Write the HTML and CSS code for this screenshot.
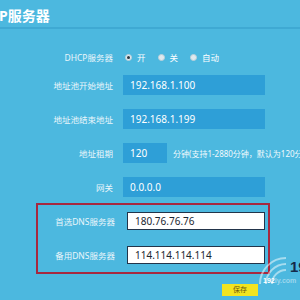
FILE: index.html
```html
<!DOCTYPE html>
<html lang="zh-CN">
<head>
    <meta charset="UTF-8">
    <title>DHCP服务器</title>
    <link rel="stylesheet" href="styles.css">
</head>
<body>
    <div class="page">
        <div class="header">
            <h1>DHCP服务器</h1>
        </div>

        <div class="form">
            <div class="row radio-row">
                <label class="label">DHCP服务器</label>
                <div class="radios">
                    <span class="radio checked"></span><span class="radio-text">开</span>
                    <span class="radio"></span><span class="radio-text">关</span>
                    <span class="radio"></span><span class="radio-text">自动</span>
                </div>
            </div>
            <div class="row">
                <label class="label">地址池开始地址</label>
                <div class="input">192.168.1.100</div>
            </div>
            <div class="row">
                <label class="label">地址池结束地址</label>
                <div class="input">192.168.1.199</div>
            </div>
            <div class="row">
                <label class="label">地址租期</label>
                <div class="input short">120</div>
                <span class="hint">分钟(支持1-2880分钟，默认为120分钟)</span>
            </div>
            <div class="row">
                <label class="label">网关</label>
                <div class="input">0.0.0.0</div>
            </div>

            <div class="dns-box">
                <div class="row">
                    <label class="label">首选DNS服务器</label>
                    <div class="input white">180.76.76.76</div>
                </div>
                <div class="row">
                    <label class="label">备用DNS服务器</label>
                    <div class="input white">114.114.114.114</div>
                </div>
            </div>

            <div class="actions">
                <button class="btn-save">保存</button>
            </div>
        </div>

        <div class="logo">
            <svg width="44" height="44" viewBox="0 0 44 44">
                <path d="M10 36 A26 26 0 0 1 36 10" fill="none" stroke="rgba(255,255,255,0.5)" stroke-width="2"/>
                <path d="M16 36 A20 20 0 0 1 36 16" fill="none" stroke="rgba(255,255,255,0.5)" stroke-width="2"/>
                <path d="M22 36 A14 14 0 0 1 36 22" fill="none" stroke="rgba(255,255,255,0.5)" stroke-width="2"/>
            </svg>
            <span class="logo-big">19</span>
            <span class="logo-small">192<em>ly.com</em></span>
        </div>
    </div>
</body>
</html>
```

FILE: styles.css
```css
* {
    margin: 0;
    padding: 0;
    box-sizing: border-box;
}

body {
    width: 300px;
    height: 300px;
    overflow: hidden;
    background-color: #4cb8df;
    font-family: "Noto Sans", "Noto Sans CJK SC", sans-serif;
    color: #ffffff;
}

.page {
    position: relative;
    height: 300px;
    overflow: hidden;
}

.header {
    height: 29px;
    border-bottom: 2px solid #3fa9d3;
    overflow: hidden;
}

.header h1 {
    font-size: 14px;
    font-weight: 700;
    line-height: 18px;
    padding-top: 7px;
    margin-left: -31px;
    white-space: nowrap;
    color: #ffffff;
}

.form {
    padding-top: 21px;
}

.row {
    display: flex;
    align-items: center;
    height: 20px;
    margin-bottom: 14px;
    white-space: nowrap;
}

.radio-row {
    height: 14px;
    margin-bottom: 11px;
}

.label {
    width: 113px;
    flex-shrink: 0;
    text-align: right;
    font-size: 8.5px;
    color: #eaf6fb;
    margin-right: 10px;
}

.radios {
    display: flex;
    align-items: center;
}

.radio {
    width: 7px;
    height: 7px;
    border-radius: 50%;
    background-color: #dfe9ee;
    border: 1px solid #b9cfd9;
    margin: 0 5px 0 2px;
    display: flex;
    align-items: center;
    justify-content: center;
}

.radio.checked::after {
    content: "";
    width: 3px;
    height: 3px;
    border-radius: 50%;
    background-color: #2c3a44;
}

.radio-text {
    font-size: 8.5px;
    margin-right: 10px;
}

.input {
    width: 142px;
    height: 20px;
    line-height: 20px;
    padding-left: 7px;
    background-color: #2e9fd7;
    font-size: 10px;
    color: #ffffff;
}

.input.short {
    width: 44px;
    flex-shrink: 0;
}

.hint {
    font-size: 8px;
    margin-left: 6px;
    color: #f2fafd;
}

.dns-box {
    width: 234px;
    margin: -8px 0 0 36px;
    padding: 7px 0 8px;
    border: 2px solid #a6283f;
}

.dns-box .row {
    height: 18px;
    margin-bottom: 16px;
    margin-left: -36px;
}

.dns-box .row:last-child {
    margin-bottom: 0;
}

.dns-box .label {
    margin-right: 12px;
}

.input.white {
    width: 138px;
    height: 18px;
    line-height: 16px;
    background-color: #ffffff;
    border: 1px solid #22344a;
    color: #1b2630;
}

.actions {
    display: flex;
    padding: 10px 0 0 222px;
}

.btn-save {
    width: 36px;
    height: 12px;
    border: none;
    background-color: #f3e41f;
    color: #6b5a10;
    font-family: inherit;
    font-size: 7px;
    line-height: 12px;
}

.logo {
    position: absolute;
    right: -10px;
    bottom: 8px;
    width: 60px;
    height: 44px;
}

.logo svg {
    position: absolute;
    left: 0;
    top: 0;
}

.logo-big {
    position: absolute;
    left: 40px;
    top: 11px;
    font-size: 15px;
    line-height: 16px;
    font-weight: 700;
    color: #152a4a;
    font-family: "Liberation Sans", sans-serif;
}

.logo-small {
    position: absolute;
    left: 13px;
    top: 29px;
    font-size: 7px;
    line-height: 8px;
    font-weight: 700;
    color: #ffffff;
    font-family: "Liberation Sans", sans-serif;
}

.logo-small em {
    font-style: normal;
    color: rgba(255, 255, 255, 0.45);
}
```
